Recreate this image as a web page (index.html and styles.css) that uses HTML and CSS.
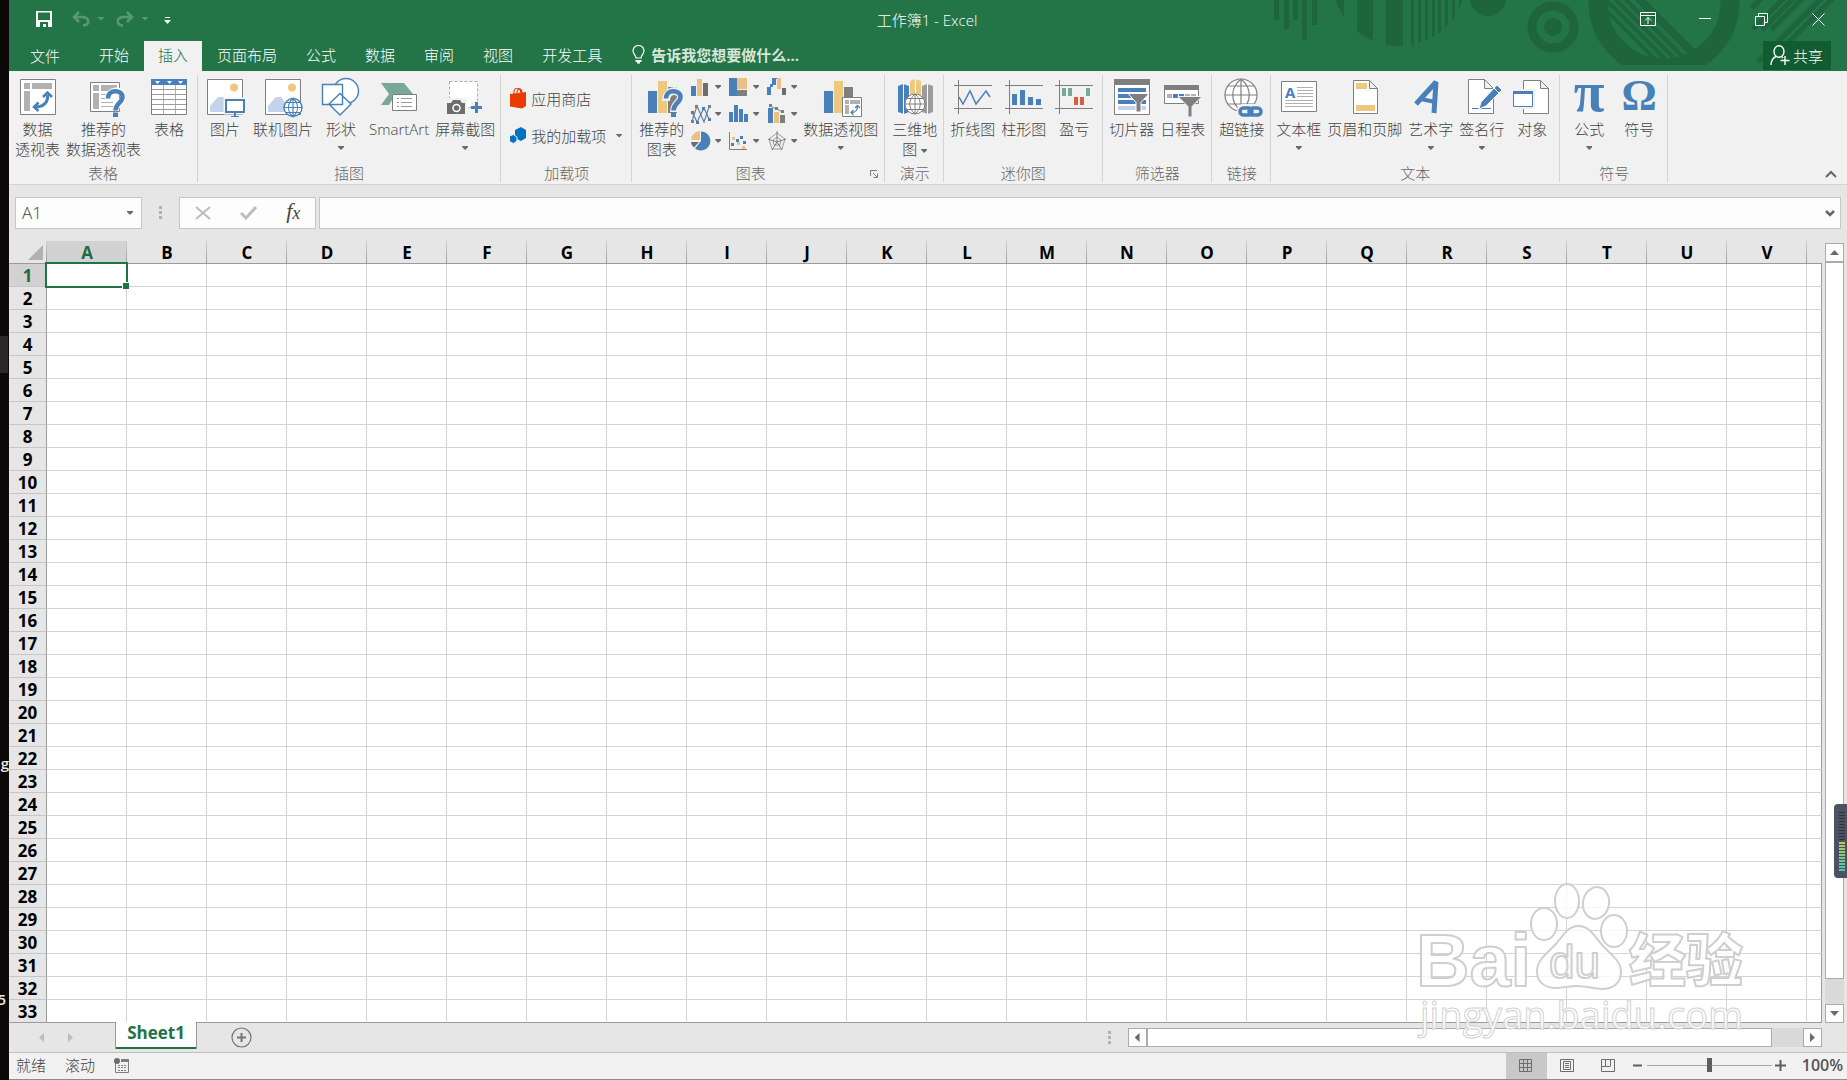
FILE: index.html
```html
<!DOCTYPE html>
<html lang="zh-CN">
<head>
<meta charset="utf-8">
<title>工作簿1 - Excel</title>
<link rel="stylesheet" href="styles.css">
</head>
<body>
<aside class="desktop-strip" aria-hidden="true">
  <span class="strip-block"></span>
  <span class="strip-text strip-g">g</span>
  <span class="strip-text strip-5">5</span>
</aside>
<div class="app">
  <header class="top">
    <svg class="pattern" width="597" height="71" viewBox="1250 0 597 71" aria-hidden="true">
      <defs>
        <clipPath id="c1"><circle cx="1399" cy="-21" r="67"/></clipPath>
        <clipPath id="c2"><circle cx="1664" cy="2" r="57"/></clipPath>
        <clipPath id="c3"><rect x="1580" y="0" width="180" height="65"/></clipPath>
      </defs>
      <g fill="#1e643c">
        <path d="M1274 0h5v20h-5zM1284 0h5v29h-5zM1293 0h5v20h-5zM1302 0h5v40h-5zM1312 0h5v25h-5z"/>
        <path clip-path="url(#c1)" d="M1330 0h14v60h-14zM1357 0h16v60h-16zM1386 0h17v60h-17zM1411 0h3v60h-3zM1418 0h3v60h-3zM1425 0h3v60h-3zM1432 0h3v60h-3zM1438 0h3v60h-3zM1445 0h3v60h-3zM1452 0h3v60h-3zM1459 0h3v60h-3z"/>
        <circle cx="1488" cy="-2" r="18"/>
        <circle cx="1553" cy="27" r="9"/>
      </g>
      <g fill="none" stroke="#1e643c">
        <circle cx="1553" cy="27" r="21" stroke-width="9"/>
        <circle cx="1664" cy="2" r="66" stroke-width="19" clip-path="url(#c3)"/>
        <path clip-path="url(#c2)" stroke-width="4" d="M1596 0l70 70M1606 0l70 70M1616 0l70 70M1626 0l70 70"/>
        <path clip-path="url(#c2)" stroke-width="8" d="M1638 -2l70 70"/>
        <path stroke-width="5" d="M1752 8l10 -10M1753 29l32 -32M1762 30l32 -32M1771 30l32 -32M1758 62l64 -64M1769 62l64 -64"/>
      </g>
    </svg>
    <div class="titlebar">
      <div class="quick">
        <button class="qbtn" aria-label="保存"><svg width="16" height="16" viewBox="0 0 16 16"><path fill="#fff" fill-rule="evenodd" d="M0 0h16v16H0zM2 1.500h12v7.500H2zM4 11h8v5h-2v-3H7v3H4z"/></svg></button>
        <button class="qbtn dim undo" aria-label="撤消"><svg width="18" height="16" viewBox="0 0 18 16"><path fill="none" stroke="#fff" stroke-width="2.500" d="M2 6h9c7 1 7 8 0 8.500M7 1L2 6l5 5"/></svg></button>
        <button class="qbtn dim" aria-label="撤消选项"><i class="caret"></i></button>
        <button class="qbtn dim redo" aria-label="恢复"><svg width="18" height="16" viewBox="0 0 18 16"><path fill="none" stroke="#fff" stroke-width="2.500" d="M16 6H7c-7 1-7 8 0 8.500M11 1l5 5-5 5"/></svg></button>
        <button class="qbtn dim" aria-label="恢复选项"><i class="caret"></i></button>
        <button class="qbtn custom" aria-label="自定义快速访问工具栏"><svg width="7" height="8" viewBox="0 0 7 8"><path fill="#fff" d="M1 0h5v1H1zM0 3h7L3.500 7z"/></svg></button>
      </div>
      <h1 class="title">工作簿1 - Excel</h1>
      <div class="winbtns">
        <button aria-label="功能区显示选项"><svg width="16" height="14" viewBox="0 0 16 14" fill="none" stroke="#fff"><path d="M.5.5h15v13H.5zM.5 3.500h15M8 12V5.500M5 8.500l3-3 3 3"/></svg></button>
        <button aria-label="最小化"><svg width="12" height="12" viewBox="0 0 12 12"><path fill="#fff" d="M0 5h12v1H0z"/></svg></button>
        <button aria-label="还原"><svg width="13" height="13" viewBox="0 0 13 13" fill="none" stroke="#fff"><path d="M.5 3.500h9v9h-9zM3.500 3V.5h9v9H10"/></svg></button>
        <button aria-label="关闭"><svg width="13" height="13" viewBox="0 0 13 13" stroke="#fff"><path d="M.5.5l12 12M12.500.5l-12 12"/></svg></button>
      </div>
    </div>
    <nav class="tabs">
      <button class="file">文件</button>
      <button>开始</button>
      <button class="active">插入</button>
      <button>页面布局</button>
      <button>公式</button>
      <button>数据</button>
      <button>审阅</button>
      <button>视图</button>
      <button>开发工具</button>
      <label class="tell"><svg width="13" height="19" viewBox="0 0 13 19"><path fill="none" stroke="#fff" stroke-width="1.200" d="M4 13C4 10 1 9 1 5.800a5.500 5.300 0 0 1 11 0C12 9 9 10 9 13z"/><path fill="#fff" d="M3.500 15h6v2h-6zM5 17h3v1.500H5z"/></svg><input type="text" aria-label="告诉我" placeholder="告诉我您想要做什么..."></label>
      <button class="share"><svg width="20" height="21" viewBox="0 0 20 21" fill="none" stroke="#fff" stroke-width="1.400"><ellipse cx="9" cy="6.500" rx="5" ry="5.800"/><path d="M1 20c0-5 2-7 5-8.500M12 12l1 1M15 11v9M10.500 15.500h9"/></svg>共享</button>
    </nav>
  </header>

  <section class="ribbon">
    <div class="group">
      <div class="items">
        <button class="big"><svg viewBox="0 0 40 40"><path fill="#fff" stroke="#7f7f7f" d="M2.500 2.500h35v35h-35z"/><path fill="#b1b1b1" d="M6 6h6v6H6zM14 6h20v6H14zM6 14h6v20H6z"/><path fill="none" stroke="#4a80b9" stroke-width="3" d="M29.500 18c1 7-4 12-12 12"/><path fill="none" stroke="#4a80b9" stroke-width="2.500" d="M25 20l4.500-4.500L34 20M20.500 25.500L16 30l4.500 4"/></svg><span>数据<br>透视表</span></button>
        <button class="big"><svg viewBox="0 0 40 40"><path fill="#fff" stroke="#7f7f7f" d="M6.500 5.500h29v29h-29z"/><path fill="#b1b1b1" d="M9 8h6v6H9zM17 8h16v6H17zM9 16h6v16H9zM17 17h8v1h-8zM17 21h8v1h-8zM17 25h12v1H17zM17 29h12v1H17z"/><path fill="none" stroke="#fff" stroke-width="6" d="M24 22c0-11 15-11 15-2 0 6-7 6-7 13"/><path fill="none" stroke="#4a80b9" stroke-width="4.500" d="M24 21.500c0-10 14.500-9 14.500-1.500 0 6-7 6-7 13.500"/><path fill="#4a80b9" d="M29 35.500h5V40h-5z"/></svg><span>推荐的<br>数据透视表</span></button>
        <button class="big"><svg viewBox="0 0 40 40"><path fill="#fff" stroke="#7f7f7f" d="M2.500 2.500h35v35h-35z"/><path fill="none" stroke="#b1b1b1" d="M14.500 8v29M26.500 8v29"/><path fill="none" stroke="#9a9a9a" d="M3 12.500h34M3 17.500h34M3 22.500h34M3 27.500h34M3 32.500h34"/><path fill="#4a80b9" d="M2 2h36v6H2z"/><path fill="#fff" d="M6 4h5L8.500 7zM18 4h5l-2.500 3zM29 4h5l-2.500 3z"/></svg><span>表格</span></button>
      </div>
      <h2>表格</h2>
    </div>
    <div class="group tight">
      <div class="items">
        <button class="big"><svg viewBox="0 0 40 40"><path fill="#fff" stroke="#7f7f7f" d="M2.500 2.500h35v35h-35z"/><circle cx="29" cy="10.500" r="4" fill="#eec87e"/><path fill="#c3d4e8" d="M5 35V29l8-9h5l6 6v9z"/><path fill="#fff" stroke="#f1f1f1" d="M19 21h22v16H19z"/><path fill="#fff" stroke="#4a80b9" stroke-width="2" d="M21 23h18v12H21z"/><path fill="#4a80b9" d="M29 36h2v3h3v1h-8v-1h3z"/></svg><span>图片</span></button>
        <button class="big"><svg viewBox="0 0 40 40"><path fill="#fff" stroke="#7f7f7f" d="M2.500 2.500h35v35h-35z"/><circle cx="29" cy="10.500" r="4" fill="#eec87e"/><path fill="#c3d4e8" d="M5 35V29l8-9h5l4 5v10z"/><circle cx="30" cy="30.500" r="9" fill="#fff" stroke="#4a80b9" stroke-width="1.400"/><path fill="none" stroke="#4a80b9" stroke-width="1.200" d="M30 21v19M21 30.500h18M23 25.500h14M23 35.500h14M30 21c-6 6-6 13 0 19M30 21c6 6 6 13 0 19"/></svg><span>联机图片</span></button>
        <button class="big"><svg viewBox="0 0 40 40" fill="#fff" stroke="#4a80b9" stroke-width="1.400"><circle cx="25" cy="14" r="12.500"/><path d="M1.500 7.500h20v20h-20zM19 16.500L30 27 19 38 8 27z"/></svg><span>形状<i class="caret"></i></span></button>
        <button class="big"><svg viewBox="0 0 40 40"><path fill="#77a898" d="M2 6h23l9 11H13v6l-3 5H2l8-11z"/><path fill="#fff" stroke="#7f7f7f" d="M13.500 17.500h24v16h-24z"/><path fill="#9a9a9a" d="M18 21h2v1h-2zM22 21h11v1H22zM18 25h2v1h-2zM22 25h11v1H22zM18 29h2v1h-2zM22 29h11v1H22z"/></svg><span>SmartArt</span></button>
        <button class="big"><svg viewBox="0 0 40 40"><path fill="#fff" stroke="#ababab" stroke-dasharray="3 2" d="M4.500 4.500h28v26h-28z"/><path fill="#f1f1f1" d="M1 21h21v17H1zM26 24h13v13H26z"/><path fill="#6d6d6d" d="M2 26h4l2-3h7l2 3h3v11H2z"/><circle cx="11.500" cy="31" r="3.500" fill="none" stroke="#fff" stroke-width="1.500"/><path fill="#4a80b9" d="M30 25h3v4h4v3h-4v4h-3v-4h-4v-3h4z"/></svg><span>屏幕截图<i class="caret"></i></span></button>
      </div>
      <h2>插图</h2>
    </div>
    <div class="group roomy">
      <div class="items stack">
        <button class="row"><svg width="17" height="21" viewBox="0 0 17 21"><path fill="#eb3c00" d="M0 6l16-2v14l-4 2.500-12-2z"/><path fill="none" stroke="#eb3c00" stroke-width="1.200" d="M4 6c-1-7 6-8 7-1M7 5c0-6 5-5 5 0"/></svg>应用商店</button>
        <button class="row"><svg width="17" height="21" viewBox="0 0 17 21"><path fill="#0072c6" d="M5 5l6-3 5 3v8l-5 3-6-3z"/><path fill="#0072c6" stroke="#f1f1f1" d="M-.5 11l4-1.500L7 12v4l-3.500 2.500-4-2z"/></svg>我的加载项<i class="caret"></i></button>
      </div>
      <h2>加载项</h2>
    </div>
    <div class="group roomy">
      <div class="items">
        <button class="big"><svg viewBox="0 0 40 40"><path fill="#4a80b9" d="M6 14h9v22H6z"/><path fill="#eec87e" d="M16 4h9v32h-9z"/><path fill="#7f7f7f" d="M26 10h9v26h-9z"/><path fill="none" stroke="#f1f1f1" stroke-width="8" d="M24 24c0-13 15-12 15-4 0 6-7 6-7 15"/><path fill="none" stroke="#4a80b9" stroke-width="4.500" d="M24 21.500c0-10 14.500-9 14.500-1.500 0 6-7 6-7 13.500"/><path fill="#4a80b9" d="M29 35.500h5V40h-5z"/></svg><span>推荐的<br>图表</span></button>
        <div class="chartgrid">
          <button aria-label="柱形图"><svg viewBox="0 0 20 20"><path fill="#4a80b9" d="M0 9h5v10H0z"/><path fill="#e9c281" d="M6 2h5v17H6z"/><path fill="#6d6d6d" d="M12 6h5v13h-5z"/></svg><i class="caret"></i></button>
          <button aria-label="层次结构图"><svg viewBox="0 0 20 20"><path fill="#4a80b9" d="M0 1h8v18H0z"/><path fill="#e9c281" d="M8 1h10v11H8z"/><path fill="#7f7f7f" d="M8 13h10v6H8z"/></svg><i class="caret"></i></button>
          <button aria-label="瀑布图"><svg viewBox="0 0 20 20"><path fill="#4a80b9" d="M0 10h4v8H0zM5 1h4v7H5zM3 7h3v3H3z"/><path fill="#e9c281" d="M10 1h4v11h-4z"/><path fill="#6d6d6d" d="M15 11h4v7h-4zM9 1h1v1H9z"/></svg><i class="caret"></i></button>
          <button aria-label="折线图"><svg viewBox="0 0 20 20"><path fill="none" stroke="#7f7f7f" stroke-width="1.200" d="M1 17L6 2l7 16 5-15"/><path fill="none" stroke="#4a80b9" stroke-width="1.200" d="M1 8l5 10 7-14 5 11"/><path fill="#7f7f7f" d="M4 1h3v3H4zM17 1h3v3h-3zM0 16h3v3H0z"/><path fill="#4a80b9" d="M0 7h3v3H0zM5 17h3v3H5zM11 3h3v3h-3zM17 14h3v3h-3z"/></svg><i class="caret"></i></button>
          <button aria-label="统计图"><svg viewBox="0 0 20 20" fill="#4a80b9"><path d="M0 8h4v10H0zM5 1h4v17H5zM10 5h4v13h-4zM15 10h4v8h-4z"/></svg><i class="caret"></i></button>
          <button aria-label="组合图"><svg viewBox="0 0 20 20"><path fill="#4a80b9" d="M1 4h5v15H1z"/><path fill="#e9c281" d="M7 8h5v11H7z"/><path fill="#7f7f7f" d="M13 11h5v8h-5z"/><path fill="none" stroke="#7f7f7f" d="M3 2l13 6"/><path fill="#7f7f7f" d="M2 0h3v3H2zM8 3h3v3H8zM14 6h3v3h-3z"/></svg><i class="caret"></i></button>
          <button aria-label="饼图"><svg viewBox="0 0 20 20"><path fill="#4a80b9" d="M10 .5a9.500 9.500 0 1 1-6 17l6-7.500z"/><path fill="#e9c281" d="M9 0v9H0a9 9 0 0 1 9-9z"/><path fill="#6d6d6d" d="M0 11h8l-5 5.500q-3-2.500-3-5.500z"/></svg><i class="caret"></i></button>
          <button aria-label="散点图"><svg viewBox="0 0 20 20"><path fill="none" stroke="#7f7f7f" d="M.5 1v17.500H18"/><path fill="#4a80b9" d="M2 12h3v3H2zM7 8h3v3H7zM11 5h3v3h-3zM14 10h3v3h-3z"/><path fill="#e9c281" d="M3 6h3v3H3zM8 11h3v3H8zM13 15h3v3h-3z"/></svg><i class="caret"></i></button>
          <button aria-label="雷达图"><svg viewBox="0 0 20 20" fill="none"><path stroke="#9a9a9a" d="M10 2l8 6-3 10H5L2 8zM10 6l4 3-1 5H7L6 9z"/><path stroke="#7f7f7f" d="M10 0v11M10 11L1 8M10 11l9-3M10 11l5 8M10 11l-5 8"/></svg><i class="caret"></i></button>
        </div>
        <button class="big"><svg viewBox="0 0 40 40"><path fill="#4a80b9" d="M3 14h9v22H3z"/><path fill="#eec87e" d="M13 4h9v32h-9z"/><path fill="#7f7f7f" d="M23 10h9v12h-9z"/><path fill="#fff" stroke="#7f7f7f" d="M21.500 20.500h19v19h-19z"/><path fill="#b1b1b1" d="M24 23h4v4h-4zM29 23h10v4H29zM24 28h4v9h-4z"/><path fill="none" stroke="#4a80b9" stroke-width="1.300" d="M36.500 29c0 5-2 6.500-6.500 6.500M34 31l2.500-2.500L39 31M32.500 33L30 35.500l2.500 2.500"/></svg><span>数据透视图<i class="caret"></i></span></button>
      </div>
      <h2 class="with-launcher">图表<button class="launcher" aria-label="图表选项"><svg width="8" height="8" viewBox="0 0 8 8"><path fill="none" stroke="#7f7f7f" d="M.5 6V.5H7M3 3l4 4M7.500 3.500v4h-4"/></svg></button></h2>
    </div>
    <div class="group roomy">
      <div class="items">
        <button class="big"><svg viewBox="0 0 40 40"><path fill="#4a80b9" d="M3 9l5-2 6 2v26l-5 2-6-2z"/><path fill="#eec87e" d="M15 4l5-2 6 2v20H15z"/><path fill="#9b9b9b" d="M27 9l5-2 6 2v26l-5 2-6-2z"/><path fill="none" stroke="#fff" d="M8.500 7v30M20.500 2v15M32.500 7v30"/><circle cx="20" cy="27" r="10" fill="#fff" stroke="#7f7f7f"/><path fill="none" stroke="#7f7f7f" d="M20 17v20M10 27h20M12 21.500h16M12 32.500h16M20 17c-7 6-7 14 0 20M20 17c7 6 7 14 0 20"/></svg><span>三维地<br>图 <i class="caret inline"></i></span></button>
      </div>
      <h2>演示</h2>
    </div>
    <div class="group">
      <div class="items">
        <button class="big"><svg viewBox="0 0 40 40" fill="none"><path stroke="#7f7f7f" d="M1 8.500h38M1 31.500h38M5.500 3v34"/><path stroke="#4a80b9" stroke-width="1.500" d="M6 20l4 7 7-13 6 13 10-13 4 6"/></svg><span>折线图</span></button>
        <button class="big"><svg viewBox="0 0 40 40"><path fill="none" stroke="#7f7f7f" d="M1 8.500h38M1 31.500h38M5.500 3v34"/><path fill="#4a80b9" d="M8 17h5v11H8zM16 13h5v15h-5zM24 20h5v8h-5zM32 22h5v6h-5z"/></svg><span>柱形图</span></button>
        <button class="big"><svg viewBox="0 0 40 40"><path fill="none" stroke="#7f7f7f" d="M1 8.500h38M1 31.500h38M5.500 3v34"/><path fill="#77a898" d="M8 11h4v8H8zM14 11h4v8h-4zM32 11h4v8h-4z"/><path fill="#d65f41" d="M20 20h4v8h-4zM26 20h4v8h-4z"/></svg><span>盈亏</span></button>
      </div>
      <h2>迷你图</h2>
    </div>
    <div class="group">
      <div class="items">
        <button class="big"><svg viewBox="0 0 40 40"><path fill="#fff" stroke="#7f7f7f" d="M2.500 2.500h35v35h-35z"/><path fill="#7f7f7f" d="M2 2h36v6H2z"/><path fill="#4a80b9" d="M6 11h28v4H6zM6 17h28v4H6zM6 23h28v4H6z"/><path fill="#c3d4e8" d="M6 29h28v4H6z"/><path fill="#7f7f7f" stroke="#fff" d="M16 16.500h21l-8 9V35h-5v-9.500z"/></svg><span>切片器</span></button>
        <button class="big"><svg viewBox="0 0 40 40"><path fill="#fff" stroke="#7f7f7f" d="M1.500 8.500h34v18h-34z"/><path fill="#7f7f7f" d="M1 8h35v5H1z"/><path fill="#b1b1b1" d="M4 17h5v4H4zM22 17h5v4h-5zM28 17h5v4h-5z"/><path fill="#4a80b9" d="M10 17h5v4h-5zM16 17h5v4h-5z"/><path fill="#7f7f7f" stroke="#f1f1f1" d="M15 19.500h24l-10 10V40h-4V29.500z"/></svg><span>日程表</span></button>
      </div>
      <h2>筛选器</h2>
    </div>
    <div class="group roomy">
      <div class="items">
        <button class="big"><svg viewBox="0 0 40 40"><g fill="none" stroke="#7f7f7f" stroke-width="1.200"><circle cx="19" cy="18" r="16" fill="#fff"/><path d="M19 2v32M3 18h32M6 9h26M6 27h26M19 2c-11 9-11 23 0 32M19 2c11 9 11 23 0 32"/></g><path fill="#f1f1f1" d="M15 31l4-4h18l3 3v10H20l-5-4z"/><g fill="none" stroke="#4a80b9" stroke-width="3.500"><rect x="18" y="31" width="12" height="7" rx="3.500"/><rect x="27" y="31" width="12" height="7" rx="3.500"/></g></svg><span>超链接</span></button>
      </div>
      <h2>链接</h2>
    </div>
    <div class="group tight">
      <div class="items">
        <button class="big"><svg viewBox="0 0 40 40"><path fill="#fff" stroke="#7f7f7f" d="M2.500 4.500h35v30h-35z"/><text x="6" y="21" class="glyph-a">A</text><path fill="#b1b1b1" d="M18 10h16v1H18zM18 13h16v1H18zM18 16h16v1H18zM18 19h16v1H18zM6 23h28v1H6zM6 26h28v1H6zM6 29h28v1H6z"/></svg><span>文本框<i class="caret"></i></span></button>
        <button class="big"><svg viewBox="0 0 40 40"><path fill="#fff" stroke="#7f7f7f" d="M8.500 3.500h16l8 8v25h-24zM24.500 3.500v8h8"/><path fill="#eec87e" d="M11 6h11v6H11zM11 28h19v6H11z"/></svg><span>页眉和页脚</span></button>
        <button class="big"><svg viewBox="0 0 40 40"><path fill="none" stroke="#4a80b9" stroke-width="5" stroke-linejoin="bevel" d="M5 27L25 5l-2 31"/><path fill="none" stroke="#4a80b9" stroke-width="4" d="M10 22l14 3"/></svg><span>艺术字<i class="caret"></i></span></button>
        <button class="big"><svg viewBox="0 0 40 40"><path fill="#fff" stroke="#7f7f7f" d="M6.500 2.500h16l9 9v25h-25zM22.500 2.500v9h9"/><path fill="none" stroke="#4a80b9" d="M10 31.500h19"/><path fill="#4a80b9" stroke="#fff" d="M17 32l2-7 16-17 5 5-16 16z"/><path stroke="#fff" d="M32 11l5 5"/></svg><span>签名行<i class="caret"></i></span></button>
        <button class="big"><svg viewBox="0 0 40 40"><path fill="#fff" stroke="#7f7f7f" d="M11.500 3.500h17l8 8v25h-25zM28.500 3.500v8h8"/><path fill="#f1f1f1" d="M0 12h23v20H0z"/><path fill="#fff" stroke="#4a80b9" d="M1.500 14.500h19v15h-19z"/><path fill="#4a80b9" d="M1 14h20v3H1z"/></svg><span>对象</span></button>
      </div>
      <h2>文本</h2>
    </div>
    <div class="group roomy">
      <div class="items">
        <button class="big"><svg viewBox="0 0 40 40"><text x="20" y="34" class="glyph-sym pi">π</text></svg><span>公式<i class="caret"></i></span></button>
        <button class="big"><svg viewBox="0 0 40 40"><text x="20" y="33" class="glyph-sym">Ω</text></svg><span>符号</span></button>
      </div>
      <h2>符号</h2>
    </div>
    <button class="collapse" aria-label="折叠功能区"><svg width="12" height="8" viewBox="0 0 12 8"><path fill="none" stroke="#666" stroke-width="2" d="M1 7l5-5 5 5"/></svg></button>
  </section>

  <section class="formulabar">
    <div class="namebox"><input type="text" aria-label="名称框" value="A1"><button aria-label="名称列表"><i class="caret"></i></button></div>
    <span class="dots"></span>
    <div class="fxbox">
      <button aria-label="取消"><svg width="16" height="14" viewBox="0 0 16 14"><path stroke="#bdbdbd" stroke-width="2" d="M1 1l14 12M15 1L1 13"/></svg></button>
      <button aria-label="输入"><svg width="17" height="14" viewBox="0 0 17 14"><path fill="none" stroke="#bdbdbd" stroke-width="3" d="M1 7l5 5L16 1"/></svg></button>
      <button class="fx" aria-label="插入函数">f<small>x</small></button>
    </div>
    <div class="formula"><input type="text" aria-label="编辑栏"><button aria-label="展开编辑栏"><svg width="10" height="7" viewBox="0 0 10 7"><path fill="none" stroke="#666" stroke-width="2.500" d="M1 1l4 4 4-4"/></svg></button></div>
  </section>

  <main class="sheet">
    <div class="gridwrap"><table class="grid" id="grid"></table></div>
    <div class="vscroll">
      <button class="sbtn" aria-label="向上"><i class="tri up"></i></button>
      <div class="vthumb"></div>
      <div class="vtrack"></div>
      <button class="sbtn" aria-label="向下"><i class="tri down"></i></button>
    </div>
  </main>

  <section class="sheetbar">
    <div class="sheetnav"><button aria-label="上一张"><i class="tri left pale"></i></button><button aria-label="下一张"><i class="tri right pale"></i></button></div>
    <button class="sheettab">Sheet1</button>
    <button class="addsheet" aria-label="新工作表"><svg width="21" height="21" viewBox="0 0 21 21"><circle cx="10.500" cy="10.500" r="9.500" fill="none" stroke="#767676" stroke-width="1.200"/><path fill="#767676" d="M9.500 6h2v3.500H15v2h-3.500V15h-2v-3.500H6v-2h3.500z"/></svg></button>
    <span class="dots"></span>
    <div class="hscroll">
      <button class="sbtn" aria-label="向左"><i class="tri left"></i></button>
      <div class="hthumb"></div>
      <div class="htrack"></div>
      <button class="sbtn" aria-label="向右"><i class="tri right"></i></button>
    </div>
  </section>

  <footer class="status">
    <span>就绪</span><span>滚动</span>
    <svg width="15" height="15" viewBox="0 0 15 15"><path fill="none" stroke="#7f7f7f" d="M1.500 5v9.500h13V1"/><path fill="#7f7f7f" d="M7 1h8v3H7zM4 7h2v1H4zM7 7h2v1H7zM10 7h2v1h-2zM4 9h2v1H4zM7 9h2v1H7zM10 9h2v1h-2zM4 12h2v1H4zM7 12h2v1H7zM10 12h2v1h-2z"/><circle cx="3" cy="3" r="3" fill="#6d6d6d"/></svg>
    <div class="views">
      <button class="on" aria-label="普通"><svg width="14" height="14" viewBox="0 0 14 14"><path fill="none" stroke="#6d6d6d" d="M.5.5h12v12H.5zM4.500 0v13M8.500 0v13M0 4.500h13M0 8.500h13"/></svg></button>
      <button aria-label="页面布局"><svg width="14" height="14" viewBox="0 0 14 14"><path fill="none" stroke="#6d6d6d" d="M.5.5h13v12H.5zM3.500 2.500h7v8h-7zM5 4.500h4M5 6.500h4M5 8.500h4"/></svg></button>
      <button aria-label="分页预览"><svg width="14" height="14" viewBox="0 0 14 14"><path fill="none" stroke="#6d6d6d" d="M.5.5h13v12H.5zM4.500 0v7M9.500 0v7M0 7.500h9.500"/></svg></button>
    </div>
    <button class="zoombtn" aria-label="缩小"><svg width="11" height="11" viewBox="0 0 11 11"><path fill="#5e5e5e" d="M1 4.500h9v2H1z"/></svg></button>
    <input class="zoom" type="range" min="0" max="100" value="50" aria-label="缩放">
    <button class="zoombtn" aria-label="放大"><svg width="11" height="11" viewBox="0 0 11 11"><path fill="#5e5e5e" d="M4.500 0h2v4.500H11v2H6.500V11h-2V6.500H0v-2h4.500z"/></svg></button>
    <span class="percent">100%</span>
  </footer>
</div>

<svg class="watermark" width="336" height="164" viewBox="1414 880 336 164" aria-hidden="true">
  <g fill="#fff" fill-opacity=".8" stroke="#cfcfcf" stroke-width="2" stroke-linejoin="round">
    <text x="1416" y="986" class="wm-bai">Bai</text>
    <ellipse cx="1544" cy="924" rx="13" ry="16"/>
    <ellipse cx="1567" cy="901" rx="12" ry="17"/>
    <ellipse cx="1596" cy="903" rx="13" ry="16" transform="rotate(10 1596 903)"/>
    <ellipse cx="1614" cy="931" rx="13" ry="16"/>
    <path d="M1578 926c12 0 16 10 25 20 10 10 18 16 18 26 0 12-9 17-19 17-8 0-15-3-24-3s-15 2-23 2c-10 0-18-6-18-17 0-10 8-16 18-26 8-9 13-19 23-19z"/>
    <text x="1549" y="978" class="wm-du">du</text>
    <text x="1629" y="981" class="wm-cn">经验</text>
  </g>
  <g fill="#fff" fill-opacity=".9" stroke="#d2d2d2">
    <text x="1420" y="1029" class="wm-url">jingyan.baidu.com</text>
  </g>
</svg>
<div class="meter" aria-hidden="true"><i class="off"></i><i class="lit"></i></div>
<script src="script.js"></script>
</body>
</html>
```

FILE: styles.css
```css
* { box-sizing: border-box; }
body {
  margin: 0;
  min-height: 100vh;
  display: flex;
  position: relative;
  overflow-x: hidden;
  background: #e6e6e6;
  color: #444;
  font: 300 15px/20px "Open Sans", "Noto Sans CJK SC", sans-serif;
}
button, input { font: inherit; color: inherit; border: 0; padding: 0; margin: 0; background: none; outline: 0; }
button { display: flex; align-items: center; justify-content: center; white-space: nowrap; }
svg { display: block; flex: none; }
h1, h2 { margin: 0; font: inherit; }

.desktop-strip { flex: none; width: 9px; background: #0c0908; position: relative; overflow: hidden; }
.strip-block { position: absolute; top: 336px; left: 0; width: 8px; height: 37px; background: #2a2828; }
.strip-text { position: absolute; right: 0; color: #e8e8e8; font-weight: 600; }
.strip-g { top: 753px; }
.strip-5 { top: 989px; right: 3px; }

.app { flex: 1; min-width: 0; display: flex; flex-direction: column; }

.caret { display: block; width: 6px; height: 4px; background: #6a6a6a; clip-path: polygon(0 0, 100% 0, 100% 25%, 50% 100%, 0 25%); }

/* title bar and tabs */
.top { background: #237547; color: #fff; position: relative; }
.pattern { position: absolute; right: 0; top: 0; }
.titlebar { position: relative; height: 41px; display: grid; grid-template-columns: 1fr auto 1fr; align-items: center; }
.quick { display: flex; align-items: center; padding: 0 0 4px 27px; }
.qbtn { height: 24px; margin-right: 8px; }
.qbtn .caret { background: #fff; }
.undo { margin-left: 12px; }
.redo { margin-left: 4px; }
.dim { opacity: .25; }
.custom { margin-left: 8px; margin-top: 4px; }
.title { font-size: 15px; padding: 0 2px 2px 0; }
.winbtns { display: flex; justify-content: flex-end; align-self: start; }
.winbtns button { width: 57px; height: 38px; }
.tabs { position: relative; display: flex; gap: 1px; height: 30px; }
.tabs > button { padding: 0 14px 2px; }
.tabs .file { padding: 0 24px 1px 21px; }
.tabs .active { background: #f1f1f1; color: #217346; }
.tell { display: flex; align-items: center; gap: 6px; padding: 0 0 3px 15px; flex: 1; }
.tell input { flex: 1; max-width: 300px; font-weight: 700; }
.tell input::placeholder { color: #d6e6dc; opacity: 1; }
.tabs .share { background: #125c32; margin-right: 16px; height: 29px; padding: 0 8px 0 7px; gap: 3px; }

/* ribbon */
.ribbon { display: flex; background: #f1f1f1; border-bottom: 1px solid #d2d2d2; padding: 4px 0 2px; }
.group { display: flex; flex-direction: column; padding: 0 3px; border-right: 1px solid #d4d4d4; }
.group.tight { padding: 0 2px; }
.group.roomy { padding: 0 3px 0 4px; }
.items { display: flex; justify-content: center; height: 89px; }
.group h2 { line-height: 18px; text-align: center; color: #666; position: relative; }
.group .with-launcher { padding-right: 16px; }
.big { flex-direction: column; justify-content: flex-start; padding: 2px 3px 0; min-width: 50px; text-align: center; }
.big svg { width: 40px; height: 40px; overflow: visible; margin-bottom: 2px; }
.big span { display: flex; flex-direction: column; align-items: center; }
.big .caret { margin-top: 7px; }
.big span:has(br) { display: block; }
.big .caret.inline { display: inline-block; vertical-align: middle; margin: 0; }
.stack { flex-direction: column; justify-content: flex-start; align-items: stretch; padding: 5px 2px 0; }
.row { justify-content: flex-start; height: 37px; gap: 4px; padding-left: 3px; }
.row .caret { margin-left: 6px; margin-right: 4px; }
.chartgrid { display: grid; grid-template-columns: 38px 38px 33px; grid-auto-rows: 27px; padding: 1px 0 0 4px; }
.chartgrid button { justify-content: flex-start; gap: 4px; height: 22px; }
.chartgrid svg { width: 20px; height: 20px; }
.launcher { position: absolute; right: 3px; top: 6px; }
.glyph-a { font: 700 15px "Open Sans", sans-serif; fill: #4a80b9; }
.glyph-sym { font: 700 44px "Liberation Serif", serif; fill: #4a80b9; text-anchor: middle; }
.glyph-sym.pi { font-size: 56px; }
.collapse { margin-left: auto; align-self: flex-end; padding: 0 10px 4px; }

/* formula bar */
.formulabar { display: flex; padding: 12px 6px; height: 56px; }
.namebox, .fxbox, .formula { display: flex; height: 32px; background: #fdfdfd; border: 1px solid #c6c6c6; }
.namebox { width: 127px; }
.namebox input { flex: 1; min-width: 0; padding: 0 0 1px 6px; font-size: 17px; }
.namebox button { width: 22px; }
.dots { width: 3px; height: 13px; background: repeating-linear-gradient(#b1b1b1 0 3px, transparent 3px 5px); }
.formulabar .dots { margin: 9px 17px 0; }
.fxbox { width: 137px; justify-content: space-around; }
.fx { font: italic 400 22px/24px "Liberation Serif", serif; color: #444; padding-bottom: 4px; }
.fx small { font-size: 18px; margin-top: 4px; }
.formula { flex: 1; margin-left: 3px; }
.formula input { flex: 1; padding: 0 6px; }
.formula button { width: 20px; }

/* worksheet */
.sheet { display: flex; }
.gridwrap { flex: 1; min-width: 0; overflow: hidden; }
.grid { width: 100%; table-layout: fixed; border-collapse: separate; border-spacing: 0; }
.grid col.rowhead { width: 38px; }
.grid col.cell { width: 80px; }
.grid th, .grid td { height: 23px; padding: 0; position: relative; }
.grid th { font: 700 17px/21px "Open Sans", sans-serif; color: #000; text-align: center; background: #e6e6e6; padding-top: 1px; }
.grid thead th { border-bottom: 1px solid #9b9b9b; }
.grid thead th:not(:last-child)::after { content: ""; position: absolute; right: 0; top: 0; bottom: 0; width: 1px; background: linear-gradient(#d0d0d0, #9b9b9b); }
.grid tbody th { border-right: 1px solid #9b9b9b; border-bottom: 1px solid #c6c6c6; }
.grid td { background: #fff; border-right: 1px solid #d4d4d4; border-bottom: 1px solid #d4d4d4; }
.grid td:last-child { border-right-color: #9b9b9b; }
.grid tbody tr:last-child > * { border-bottom-color: #9b9b9b; }
.grid th.sel { background: #d2d2d2; color: #1f6b41; }
.corner::before { content: ""; position: absolute; right: 4px; bottom: 3px; width: 15px; height: 15px; background: #b1b1b1; clip-path: polygon(100% 0, 100% 100%, 0 100%); }
.cursor { position: absolute; z-index: 1; inset: -2px; border: 2px solid #217346; }
.cursor::after { content: ""; position: absolute; right: -3px; bottom: -3px; width: 6px; height: 6px; background: #217346; border: solid #fff; border-width: 1px 0 0 1px; }
.vscroll { width: 25px; padding: 2px 3px 0; display: flex; flex-direction: column; }
.sbtn { width: 19px; height: 19px; background: #fdfdfd; border: 1px solid #ababab; flex: none; }
.vthumb { flex: 1; background: #fff; border: 1px solid #ababab; }
.vtrack { height: 25px; background: #dadada; }
.tri { display: block; width: 9px; height: 5px; background: #6a6a6a; }
.tri.up { clip-path: polygon(50% 0, 100% 100%, 0 100%); }
.tri.down { clip-path: polygon(0 0, 100% 0, 50% 100%); }
.tri.left, .tri.right { width: 5px; height: 9px; }
.tri.left { clip-path: polygon(100% 0, 100% 100%, 0 50%); }
.tri.right { clip-path: polygon(0 0, 100% 50%, 0 100%); }
.tri.pale { background: #bdbdbd; }

/* sheet tabs */
.sheetbar { display: flex; height: 30px; border-bottom: 1px solid #c0c0c0; }
.sheetnav { display: flex; gap: 24px; padding-left: 30px; width: 106px; }
.sheettab { width: 82px; height: 27px; margin-top: -1px; background: #fff; border: solid #9b9b9b; border-width: 0 1px; box-shadow: inset 0 -2px #217346; color: #217346; font-weight: 700; font-size: 17px; padding-bottom: 6px; position: relative; }
.addsheet { margin-left: 34px; }
.sheetbar .dots { margin: 8px 17px 0 auto; }
.hscroll { display: flex; width: calc(38% - 4px); margin-right: 25px; padding-top: 5px; }
.hthumb { flex: 1; height: 19px; background: #fff; border: 1px solid #ababab; }
.htrack { width: 31px; height: 19px; background: #dadada; }

/* status bar */
.status { display: flex; align-items: center; height: 27px; background: #f1f1f1; border-bottom: 1px solid #8a8a90; padding: 0 0 2px 7px; }
.status > span { margin-right: 19px; }
.views { display: flex; margin: 0 0 -2px auto; align-self: stretch; }
.views button { width: 41px; }
.views .on { background: #c8c8c8; }
.zoombtn { width: 18px; align-self: stretch; }
.zoom { -webkit-appearance: none; appearance: none; width: 125px; height: 15px; background: linear-gradient(#a6a6a6, #a6a6a6) center / 100% 1px no-repeat; }
.zoom::-webkit-slider-thumb { -webkit-appearance: none; width: 5px; height: 14px; background: #5e5e5e; }
.status .percent { margin: 0 4px 0 12px; font-size: 16px; font-weight: 600; color: #555; }

/* floating overlays */
.watermark { position: absolute; right: 97px; bottom: 36px; pointer-events: none; }
.wm-bai { font: 700 74px "Liberation Sans", sans-serif; }
.wm-du { font: 400 46px "Liberation Sans", sans-serif; }
.wm-cn { font: 900 57px "Noto Sans CJK SC", sans-serif; }
.wm-url { font: 400 38px "Open Sans", sans-serif; }
.meter { position: absolute; right: 0; top: 804px; width: 13px; height: 74px; border-radius: 4px 0 0 4px; background: #4b5363; padding: 8px 2px 8px 5px; }
.meter i { display: block; height: 30px; }
.meter .off { background: repeating-linear-gradient(#30343f 0 1px, transparent 1px 3px); }
.meter .lit { background: repeating-linear-gradient(transparent 0 2px, #4b5363 2px 3px), linear-gradient(#b8cc4a, #3fc8bb); }
```

FILE: script.js
```js
const COLUMNS = 'ABCDEFGHIJKLMNOPQRSTUV'.split('');
const ROWS = 33;
const grid = document.getElementById('grid');

const cols = '<col class="rowhead">' + COLUMNS.map(() => '<col class="cell">').join('') + '<col>';
const head = COLUMNS.map((c, i) => `<th scope="col"${i === 0 ? ' class="sel"' : ''}>${c}</th>`).join('');
let body = '';
for (let r = 1; r <= ROWS; r++) {
  const first = r === 1 ? '<td><div class="cursor"></div></td>' : '<td></td>';
  body += `<tr><th scope="row"${r === 1 ? ' class="sel"' : ''}>${r}</th>${first}${'<td></td>'.repeat(COLUMNS.length)}</tr>`;
}
grid.innerHTML = `<colgroup>${cols}</colgroup><thead><tr><th class="corner"></th>${head}<th></th></tr></thead><tbody>${body}</tbody>`;
```
